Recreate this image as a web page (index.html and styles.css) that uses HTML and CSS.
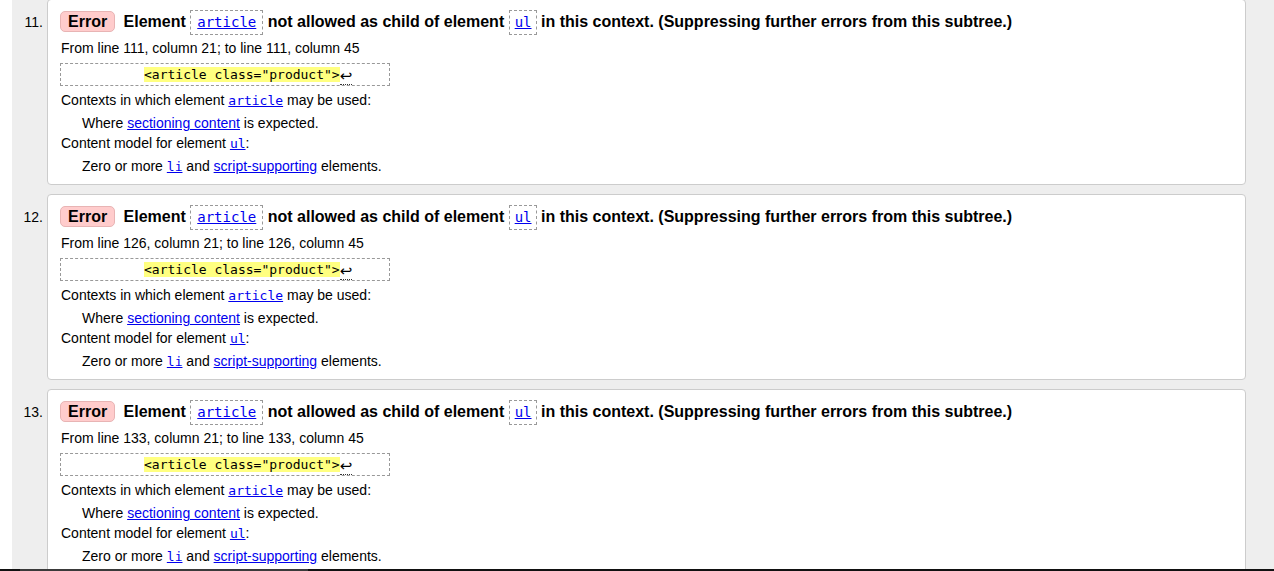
FILE: index.html
```html
<!DOCTYPE html>
<html lang="en">
<head>
<meta charset="utf-8">
<title>Validator messages</title>
<link rel="stylesheet" href="styles.css">
</head>
<body>
<div class="page">
  <ol class="msgs">
    <li class="msg">
      <span class="num">11.</span>
      <div class="card">
        <p class="title"><strong class="badge">Error</strong> Element <code class="box"><a href="#">article</a></code> not allowed as child of element <code class="box box-s"><a href="#">ul</a></code> in this context. (Suppressing further errors from this subtree.)</p>
        <p class="loc">From line 111, column 21; to line 111, column 45</p>
        <p class="extract"><code><b class="hl">&lt;article class="product"&gt;</b><span class="lf">↩</span></code></p>
        <dl class="info">
          <dt>Contexts in which element <a href="#" class="mono">article</a> may be used:</dt>
          <dd>Where <a href="#">sectioning content</a> is expected.</dd>
          <dt>Content model for element <a href="#" class="mono">ul</a>:</dt>
          <dd>Zero or more <a href="#" class="mono">li</a> and <a href="#">script-supporting</a> elements.</dd>
        </dl>
      </div>
    </li>
    <li class="msg">
      <span class="num">12.</span>
      <div class="card">
        <p class="title"><strong class="badge">Error</strong> Element <code class="box"><a href="#">article</a></code> not allowed as child of element <code class="box box-s"><a href="#">ul</a></code> in this context. (Suppressing further errors from this subtree.)</p>
        <p class="loc">From line 126, column 21; to line 126, column 45</p>
        <p class="extract"><code><b class="hl">&lt;article class="product"&gt;</b><span class="lf">↩</span></code></p>
        <dl class="info">
          <dt>Contexts in which element <a href="#" class="mono">article</a> may be used:</dt>
          <dd>Where <a href="#">sectioning content</a> is expected.</dd>
          <dt>Content model for element <a href="#" class="mono">ul</a>:</dt>
          <dd>Zero or more <a href="#" class="mono">li</a> and <a href="#">script-supporting</a> elements.</dd>
        </dl>
      </div>
    </li>
    <li class="msg">
      <span class="num">13.</span>
      <div class="card">
        <p class="title"><strong class="badge">Error</strong> Element <code class="box"><a href="#">article</a></code> not allowed as child of element <code class="box box-s"><a href="#">ul</a></code> in this context. (Suppressing further errors from this subtree.)</p>
        <p class="loc">From line 133, column 21; to line 133, column 45</p>
        <p class="extract"><code><b class="hl">&lt;article class="product"&gt;</b><span class="lf">↩</span></code></p>
        <dl class="info">
          <dt>Contexts in which element <a href="#" class="mono">article</a> may be used:</dt>
          <dd>Where <a href="#">sectioning content</a> is expected.</dd>
          <dt>Content model for element <a href="#" class="mono">ul</a>:</dt>
          <dd>Zero or more <a href="#" class="mono">li</a> and <a href="#">script-supporting</a> elements.</dd>
        </dl>
      </div>
    </li>
  </ol>
</div>
<div class="hbar"><span class="thumb"></span></div>
</body>
</html>
```

FILE: styles.css
```css
html, body {
  margin: 0;
  padding: 0;
  height: 571px;
  overflow: hidden;
  background: #fff;
}
body {
  font-family: "Liberation Sans", Arial, sans-serif;
  font-size: 14px;
  color: #000;
}
.page {
  margin-left: 12px;
  background: #eeeeee;
  min-height: 571px;
}
.msgs {
  list-style: none;
  margin: 0;
  padding: 0 28px 0 0;
  position: relative;
  top: -1px;
}
.msg {
  display: flex;
  margin-bottom: 9px;
}
.num {
  flex: 0 0 35px;
  box-sizing: border-box;
  text-align: right;
  padding-right: 4px;
  padding-top: 11px;
  line-height: 24px;
  font-size: 14px;
}
.card {
  flex: 1;
  background: #fff;
  border: 1px solid #cccccc;
  border-radius: 4px;
  padding: 9px 13px 10px;
  height: 186px;
  box-sizing: border-box;
}
.title {
  margin: 0;
  font-weight: bold;
  font-size: 16px;
  line-height: 26px;
  height: 26px;
  white-space: nowrap;
}
.badge {
  display: inline-block;
  background: #ffcccc;
  border: 1px solid #e8b4b4;
  border-radius: 5px;
  padding: 0 7px;
  line-height: 19px;
  margin-left: -1px;
  margin-right: 4px;
}
.box {
  display: inline-block;
  font-family: "DejaVu Sans Mono", monospace;
  font-weight: normal;
  font-size: 14px;
  line-height: 17px;
  padding: 3px 6px;
  border: 1px dashed #999;
  vertical-align: 0;
}
.box-s {
  padding: 3px 4px 3px 5px;
}
a {
  color: #0000ee;
  text-decoration: underline;
}
.mono {
  font-family: "DejaVu Sans Mono", monospace;
  font-size: 13px;
}
.loc {
  margin: 3px 0 0;
  line-height: 20px;
}
.extract {
  margin: 5px 0 0 -1px;
  width: 330px;
  box-sizing: border-box;
  border: 1px dashed #999;
  padding-left: 83px;
  line-height: 21px;
  height: 23px;
  white-space: nowrap;
}
.extract code {
  font-family: "DejaVu Sans Mono", monospace;
  font-size: 13px;
}
.hl {
  font-weight: normal;
  background: #ffff80;
}
.lf {
  display: inline-block;
  font-family: "DejaVu Sans", sans-serif;
  font-size: 15px;
  line-height: 15px;
  border-bottom: 1px dotted #333;
  vertical-align: -2px;
}
.info {
  margin: 4px 0 0;
  line-height: 20px;
}
.info dt {
  margin: 0;
}
.info dd {
  margin: 2px 0 0 21px;
}
.hbar {
  position: fixed;
  left: 0;
  right: 0;
  bottom: 0;
  height: 2px;
  background: #111;
}
.thumb {
  position: absolute;
  left: 20px;
  width: 288px;
  top: 0;
  bottom: 0;
  background: #3a3a3a;
}
```
